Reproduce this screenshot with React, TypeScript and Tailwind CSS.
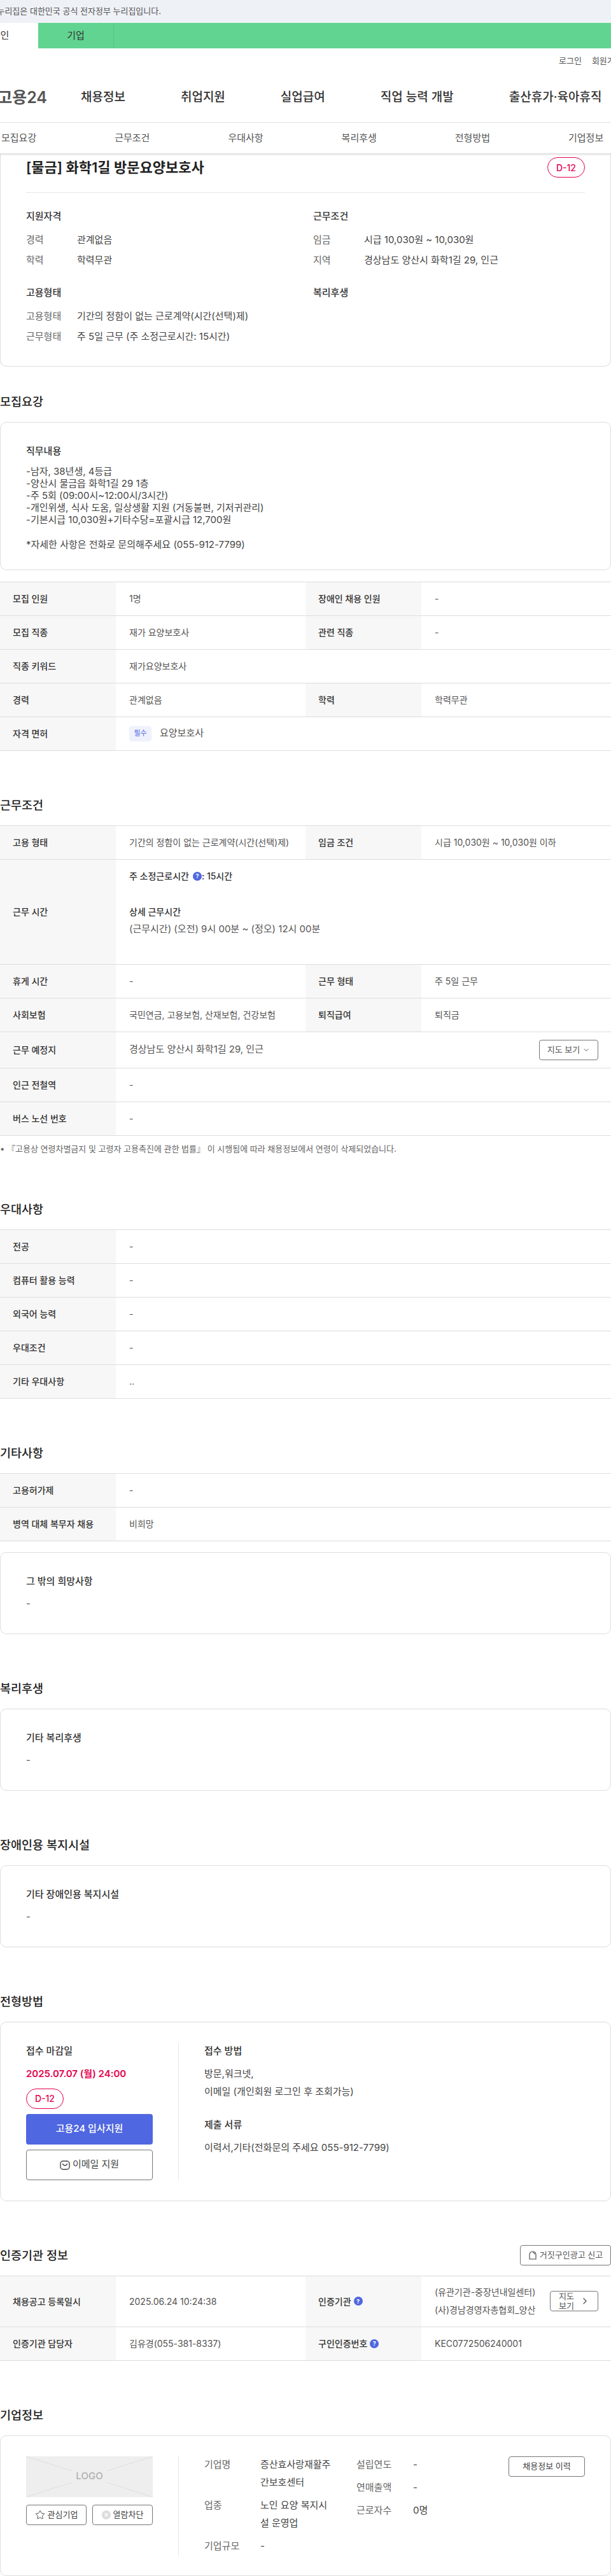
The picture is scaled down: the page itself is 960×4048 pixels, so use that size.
import type { ReactNode } from "react";
import { ChevronDown, ChevronRight, Star } from "lucide-react";

const navItems = ["채용정보", "취업지원", "실업급여", "직업 능력 개발", "출산휴가·육아휴직"];
const tabs = ["모집요강", "근무조건", "우대사항", "복리후생", "전형방법", "기업정보"];

function Help() {
  return (
    <span className="inline-flex h-[14px] w-[14px] shrink-0 items-center justify-center rounded-full bg-[#4f67e0] text-[9px] font-bold leading-none text-white">
      ?
    </span>
  );
}

function DDay() {
  return (
    <span className="flex h-8 w-[59px] items-center justify-center rounded-2xl border border-[#e6004d] text-[14px] font-medium text-[#e6004d]">
      D-12
    </span>
  );
}

function Label({ children }: { children: ReactNode }) {
  return (
    <div className="flex w-[182px] shrink-0 items-center gap-1 self-stretch bg-[#f7f7f7] pl-5 font-medium text-[#333]">
      {children}
    </div>
  );
}

function Value({ children, wide }: { children: ReactNode; wide?: boolean }) {
  return (
    <div className={`flex items-center pl-[21px] text-[#555] ${wide ? "flex-1" : "w-[298px] shrink-0"}`}>
      {children}
    </div>
  );
}

function Row({ h = "h-[53px]", children }: { h?: string; children: ReactNode }) {
  return <div className={`flex border-b border-[#ddd] text-[14px] ${h}`}>{children}</div>;
}

function Table({ children }: { children: ReactNode }) {
  return <div className="border-t border-[#ddd]">{children}</div>;
}

function Section({ title, action, children }: { title: string; action?: ReactNode; children: ReactNode }) {
  return (
    <section className="mt-[71px]">
      <div className="mb-[18px] flex h-7 items-center justify-between">
        <h2 className="text-[18.5px] font-medium leading-7 text-[#222]">{title}</h2>
        {action}
      </div>
      {children}
    </section>
  );
}

function TextCard({ title }: { title: string }) {
  return (
    <div className="h-[129px] rounded-[10px] border border-[#ddd] px-10 pt-[33px]">
      <h3 className="text-[15px] font-medium leading-6 text-[#333]">{title}</h3>
      <p className="mt-[11px] text-[15px] leading-6 text-[#555]">-</p>
    </div>
  );
}

function InfoLine({ label, value }: { label: string; value: string }) {
  return (
    <div className="flex h-8 items-center text-[15px]">
      <span className="w-20 text-[#666]">{label}</span>
      <span className="text-[#444]">{value}</span>
    </div>
  );
}

export default function App() {
  return (
    <div className="w-[960px] overflow-hidden bg-white font-['Inter','Noto_Sans_CJK_KR',sans-serif] text-[#333]">
      {/* top banners */}
      <div className="flex h-9 w-full items-center bg-[#eef1f6]">
        <div className="flex w-[253px] justify-end overflow-hidden whitespace-nowrap text-[13px] text-[#555]">
          이 누리집은 대한민국 공식 전자정부 누리집입니다.
        </div>
      </div>
      <div className="flex h-10 bg-[#62d491] text-[15px] text-[#333]">
        <div className="-ml-[59px] flex w-[119px] items-center justify-center bg-white">개인</div>
        <div className="flex w-[119px] items-center justify-center border-r border-[#56c583]">기업</div>
      </div>

      {/* header */}
      <div className="flex h-10 items-center gap-4 whitespace-nowrap pl-[878px] text-[13px] text-[#555]">
        <span>로그인</span>
        <span>회원가입</span>
      </div>
      <div className="flex h-[77px] items-center whitespace-nowrap border-b border-[#e5e5e5] pb-px">
        <div className="flex w-[74px] shrink-0 justify-end text-[25px] font-semibold text-[#555]">고용24</div>
        <nav className="ml-[53px] flex gap-[87px] text-[19px] font-medium text-[#333]">
          {navItems.map((item) => (
            <span key={item}>{item}</span>
          ))}
        </nav>
      </div>
      <div className="relative z-10 flex h-[49px] items-center gap-[123px] whitespace-nowrap border-b border-[#ddd] pl-[2px] text-[15px] text-[#555] shadow-sm">
        {tabs.map((t) => (
          <span key={t}>{t}</span>
        ))}
      </div>

      {/* summary card */}
      <div className="rounded-b-[10px] border border-t-0 border-[#ddd] px-10 pb-[30px] pt-[5px]">
        <div className="flex h-14 items-start justify-between border-b border-[#e5e5e5]">
          <h1 className="text-[22px] font-semibold leading-8 text-[#222]">[물금] 화학1길 방문요양보호사</h1>
          <DDay />
        </div>
        <div className="grid grid-cols-[451px_1fr] pt-[25px]">
          <div>
            <h3 className="mb-[9px] text-[15px] font-medium leading-6">지원자격</h3>
            <InfoLine label="경력" value="관계없음" />
            <InfoLine label="학력" value="학력무관" />
          </div>
          <div>
            <h3 className="mb-[9px] text-[15px] font-medium leading-6">근무조건</h3>
            <InfoLine label="임금" value="시급 10,030원 ~ 10,030원" />
            <InfoLine label="지역" value="경상남도 양산시 화학1길 29, 인근" />
          </div>
          <div className="mt-[23px]">
            <h3 className="mb-[9px] text-[15px] font-medium leading-6">고용형태</h3>
            <InfoLine label="고용형태" value="기간의 정함이 없는 근로계약(시간(선택)제)" />
            <InfoLine label="근무형태" value="주 5일 근무 (주 소정근로시간: 15시간)" />
          </div>
          <div className="mt-[23px]">
            <h3 className="text-[15px] font-medium leading-6">복리후생</h3>
          </div>
        </div>
      </div>

      {/* 모집요강 */}
      <section className="mt-[41px]">
        <h2 className="mb-[18px] text-[18.5px] font-medium leading-7 text-[#222]">모집요강</h2>
        <div className="rounded-[10px] border border-[#ddd] px-10 pb-[30px] pt-[33px]">
          <h3 className="text-[15px] font-medium leading-6">직무내용</h3>
          <p className="mt-[10px] whitespace-pre-line text-[15px] leading-[19.1px] text-[#444]">
            {`-남자, 38년생, 4등급
-양산시 물금읍 화학1길 29 1층
-주 5회 (09:00시~12:00시/3시간)
-개인위생, 식사 도움, 일상생활 지원 (거동불편, 기저귀관리)
-기본시급 10,030원+기타수당=포괄시급 12,700원

*자세한 사항은 전화로 문의해주세요 (055-912-7799)`}
          </p>
        </div>
        <div className="mt-[18px]">
          <Table>
            <Row>
              <Label>모집 인원</Label>
              <Value>1명</Value>
              <Label>장애인 채용 인원</Label>
              <Value wide>-</Value>
            </Row>
            <Row>
              <Label>모집 직종</Label>
              <Value>재가 요양보호사</Value>
              <Label>관련 직종</Label>
              <Value wide>-</Value>
            </Row>
            <Row>
              <Label>직종 키워드</Label>
              <Value wide>재가요양보호사</Value>
            </Row>
            <Row>
              <Label>경력</Label>
              <Value>관계없음</Value>
              <Label>학력</Label>
              <Value wide>학력무관</Value>
            </Row>
            <Row>
              <Label>자격 면허</Label>
              <Value wide>
                <span className="mr-[13px] flex h-6 w-[35px] items-center justify-center rounded bg-[#eff1fd] text-[11px] text-[#4f67e0]">필수</span>
                <span className="text-[15px]">요양보호사</span>
              </Value>
            </Row>
          </Table>
        </div>
      </section>

      {/* 근무조건 */}
      <Section title="근무조건">
        <Table>
          <Row>
            <Label>고용 형태</Label>
            <Value>기간의 정함이 없는 근로계약(시간(선택)제)</Value>
            <Label>임금 조건</Label>
            <Value wide>시급 10,030원 ~ 10,030원 이하</Value>
          </Row>
          <Row h="h-[165px]">
            <Label>근무 시간</Label>
            <div className="flex-1 pl-[21px] pt-[14px] text-[#555]">
              <div className="flex h-6 items-center gap-1.5 font-medium text-[#333]">
                주 소정근로시간 <Help /><span className="-ml-1.5">: 15시간</span>
              </div>
              <div className="mt-8 flex h-6 items-center font-medium text-[#333]">상세 근무시간</div>
              <div className="mt-1 flex h-6 items-center text-[15px]">(근무시간) (오전) 9시 00분 ~ (정오) 12시 00분</div>
            </div>
          </Row>
          <Row>
            <Label>휴게 시간</Label>
            <Value>-</Value>
            <Label>근무 형태</Label>
            <Value wide>주 5일 근무</Value>
          </Row>
          <Row>
            <Label>사회보험</Label>
            <Value>국민연금, 고용보험, 산재보험, 건강보험</Value>
            <Label>퇴직급여</Label>
            <Value wide>퇴직금</Value>
          </Row>
          <Row h="h-[57px]">
            <Label>근무 예정지</Label>
            <Value wide>
              <span className="text-[15px]">경상남도 양산시 화학1길 29, 인근</span>
              <button className="ml-auto mr-5 flex h-8 w-[93px] items-center justify-center gap-1 rounded border border-[#777] text-[13px] text-[#555]">
                지도 보기 <ChevronDown className="h-3 w-3" />
              </button>
            </Value>
          </Row>
          <Row>
            <Label>인근 전철역</Label>
            <Value wide>-</Value>
          </Row>
          <Row>
            <Label>버스 노선 번호</Label>
            <Value wide>-</Value>
          </Row>
        </Table>
        <p className="mt-[10px] h-5 text-[13px] leading-5 text-[#666]">
          • 『고용상 연령차별금지 및 고령자 고용촉진에 관한 법률』 이 시행됨에 따라 채용정보에서 연령이 삭제되었습니다.
        </p>
      </Section>

      {/* 우대사항 */}
      <Section title="우대사항">
        <Table>
          <Row><Label>전공</Label><Value wide>-</Value></Row>
          <Row><Label>컴퓨터 활용 능력</Label><Value wide>-</Value></Row>
          <Row><Label>외국어 능력</Label><Value wide>-</Value></Row>
          <Row><Label>우대조건</Label><Value wide>-</Value></Row>
          <Row><Label>기타 우대사항</Label><Value wide>..</Value></Row>
        </Table>
      </Section>

      {/* 기타사항 */}
      <Section title="기타사항">
        <Table>
          <Row><Label>고용허가제</Label><Value wide>-</Value></Row>
          <Row><Label>병역 대체 복무자 채용</Label><Value wide>비희망</Value></Row>
        </Table>
        <div className="mt-[17px]">
          <TextCard title="그 밖의 희망사항" />
        </div>
      </Section>

      <Section title="복리후생">
        <TextCard title="기타 복리후생" />
      </Section>

      <Section title="장애인용 복지시설">
        <TextCard title="기타 장애인용 복지시설" />
      </Section>

      {/* 전형방법 */}
      <Section title="전형방법">
        <div className="flex rounded-[10px] border border-[#ddd] py-8 pl-10">
          <div className="w-[199px] shrink-0">
            <h3 className="text-[15px] font-medium leading-[26px]">접수 마감일</h3>
            <p className="mt-[11px] text-[15px] font-semibold leading-6 text-[#e6004d]">2025.07.07 (월) 24:00</p>
            <div className="mt-[11px]">
              <DDay />
            </div>
            <button className="mt-2 h-12 w-full rounded bg-[#4f67e0] text-[15px] font-medium text-white">고용24 입사지원</button>
            <button className="mt-2 flex h-12 w-full items-center justify-center gap-1 rounded border border-[#777] text-[15px] text-[#444]">
              <svg width="16" height="16" viewBox="0 0 16 16" fill="none" stroke="#444" strokeWidth="1.4">
                <rect x="1" y="2" width="14" height="13" rx="4" />
                <path d="M4.5 6.5 Q8 11.5 11.5 6.5" strokeLinecap="round" />
              </svg>
              이메일 지원
            </button>
          </div>
          <div className="ml-10 mr-10 w-px shrink-0 bg-[#e5e5e5]" />
          <div className="text-[15px] text-[#444]">
            <h3 className="font-medium leading-[26px] text-[#333]">접수 방법</h3>
            <p className="mt-[9px] leading-7">방문,워크넷,</p>
            <p className="leading-7">이메일 (개인회원 로그인 후 조회가능)</p>
            <h3 className="mt-[25px] font-medium leading-[26px] text-[#333]">제출 서류</h3>
            <p className="mt-[9px] leading-7">이력서,기타(전화문의 주세요 055-912-7799)</p>
          </div>
        </div>
      </Section>

      {/* 인증기관 정보 */}
      <Section
        title="인증기관 정보"
        action={
          <button className="flex h-8 w-[143px] items-center justify-center gap-1 rounded border border-[#777] text-[13px] text-[#555]">
            <svg width="14" height="16" viewBox="0 0 14 16" fill="none" stroke="#444" strokeWidth="1.1">
              <path d="M2 14 V7 a5 5 0 0 1 10 0 V14 Z" />
              <path d="M7 3.5 a3 3 0 0 1 3 3" />
            </svg>
            거짓구인광고 신고
          </button>
        }
      >
        <Table>
          <Row h="h-[80px]">
            <Label>채용공고 등록일시</Label>
            <Value>2025.06.24 10:24:38</Value>
            <Label>인증기관 <Help /></Label>
            <Value wide>
              <span className="w-[172px] shrink-0 whitespace-nowrap leading-7">
                (유관기관-중장년내일센터)
                <br />
                (사)경남경영자총협회_양산
              </span>
              <button className="ml-[9px] flex h-8 w-[76px] items-center justify-center gap-2 rounded border border-[#777] text-[13px] leading-[15px] text-[#555]">
                <span className="w-[26px]">지도 보기</span>
                <ChevronRight className="h-4 w-4" />
              </button>
            </Value>
          </Row>
          <Row>
            <Label>인증기관 담당자</Label>
            <Value>김유경(055-381-8337)</Value>
            <Label>구인인증번호 <Help /></Label>
            <Value wide>KEC0772506240001</Value>
          </Row>
        </Table>
      </Section>

      {/* 기업정보 */}
      <Section title="기업정보">
        <div className="flex h-[221px] rounded-[10px] border border-[#ddd] pl-10 pr-10 pt-8">
          <div className="w-[199px] shrink-0">
            <div className="relative flex h-16 items-center justify-center bg-[#eeeeee] text-[15px] font-medium text-[#b0b0b0]">
              <svg className="absolute inset-0" width="199" height="64" viewBox="0 0 199 64" stroke="#dedede" fill="none">
                <path d="M0 0 L72 23 M127 23 L199 0 M0 64 L72 41 M127 41 L199 64" />
              </svg>
              LOGO
            </div>
            <div className="mt-3 flex gap-[9px] text-[13px] text-[#444]">
              <button className="flex h-8 flex-1 items-center justify-center gap-1 rounded border border-[#777]">
                <Star className="h-4 w-4" strokeWidth={1.4} /> 관심기업
              </button>
              <button className="flex h-8 flex-1 items-center justify-center gap-1 rounded border border-[#777]">
                <svg width="14" height="14" viewBox="0 0 14 14">
                  <circle cx="7" cy="7" r="7" fill="#dcdcdc" />
                  <path d="M4.5 4.5 L9.5 9.5 M9.5 4.5 L4.5 9.5" stroke="#fff" strokeWidth="1.4" />
                </svg>
                열람차단
              </button>
            </div>
          </div>
          <div className="mx-10 h-[156px] w-px shrink-0 bg-[#e5e5e5]" />
          <div className="-mt-px w-[239px] shrink-0 text-[15px] leading-7 text-[#444]">
            <div className="flex">
              <span className="w-[88px] shrink-0 text-[#666]">기업명</span>
              <span className="w-[116px] break-all">증산효사랑재활주간보호센터</span>
            </div>
            <div className="mt-2 flex">
              <span className="w-[88px] shrink-0 text-[#666]">업종</span>
              <span className="w-[116px] break-all">노인 요양 복지시설 운영업</span>
            </div>
            <div className="mt-2 flex">
              <span className="w-[88px] shrink-0 text-[#666]">기업규모</span>
              <span>-</span>
            </div>
          </div>
          <div className="-mt-px text-[15px] leading-7 text-[#444]">
            <div className="flex">
              <span className="w-[89px] text-[#666]">설립연도</span>
              <span>-</span>
            </div>
            <div className="mt-2 flex">
              <span className="w-[89px] text-[#666]">연매출액</span>
              <span>-</span>
            </div>
            <div className="mt-2 flex">
              <span className="w-[89px] text-[#666]">근로자수</span>
              <span>0명</span>
            </div>
          </div>
          <button className="ml-auto h-8 w-[120px] rounded border border-[#777] text-[13px] text-[#444]">채용정보 이력</button>
        </div>
      </Section>
    </div>
  );
}
